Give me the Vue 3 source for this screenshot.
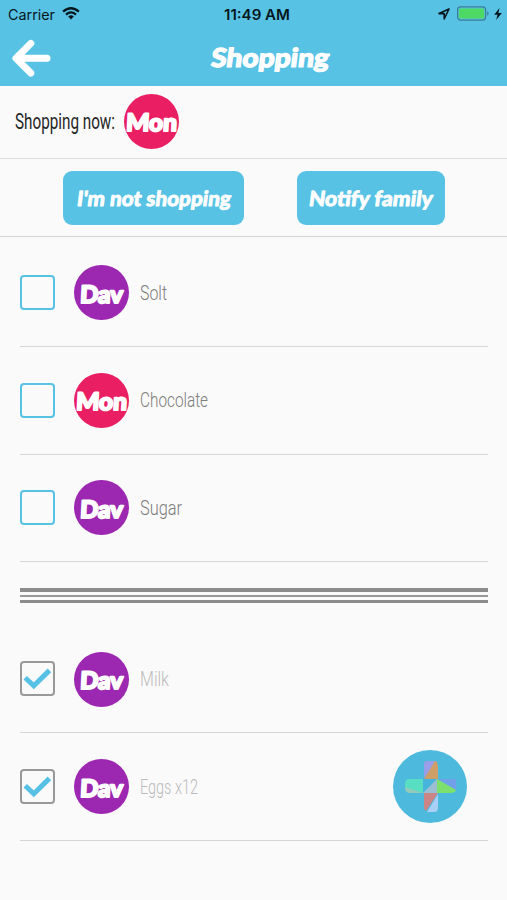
<script setup>
import { h } from 'vue'

// A single line of text set to a fixed measure, so that labels keep their condensed proportions.
const Label = (props) =>
  h('svg', { class: 'label', width: props.w, height: 30, role: 'img', 'aria-label': props.text }, [
    h('text', { x: 0, y: 22, textLength: props.w, lengthAdjust: 'spacingAndGlyphs' }, props.text),
  ])
Label.props = ['text', 'w']

const pending = [
  { who: 'Dav', name: 'Solt', w: 27 },
  { who: 'Mon', name: 'Chocolate', w: 68 },
  { who: 'Dav', name: 'Sugar', w: 42 },
]
const done = [
  { who: 'Dav', name: 'Milk', w: 29 },
  { who: 'Dav', name: 'Eggs x12', w: 58 },
]
const sections = [
  { key: 'pending', items: pending },
  { key: 'done', items: done },
]
const badgeWidth = { Dav: 43, Mon: 51 }
</script>

<template>
  <div class="screen">
    <header class="header">
      <div class="status">
        <div class="side">
          <Label class="carrier" text="Carrier" :w="47" />
          <svg class="wifi" width="18" height="13" viewBox="0 0 18 13">
            <g fill="none" stroke="#06171d" stroke-width="2.2">
              <path d="M1.1 4.7Q9-2.2 16.9 4.7" />
              <path d="M4 7.6Q9 3.3 14 7.6" />
            </g>
            <path d="M6.2 9.5Q9 7.2 11.8 9.5L9 12.5Z" fill="#06171d" />
          </svg>
        </div>
        <Label class="clock" text="11:49 AM" :w="66" />
        <div class="side right">
          <svg width="12" height="12" viewBox="0 0 12 12">
            <path d="M11 1L1 5.6H6.2V11Z" fill="none" stroke="#06171d" stroke-width="1.6" stroke-linejoin="round" />
          </svg>
          <svg class="battery" width="33" height="15" viewBox="0 0 33 15">
            <rect x=".6" y=".9" width="28" height="13.2" rx="3" fill="none" stroke="#397e95" stroke-width="1.2" />
            <rect x="2" y="2.4" width="25.2" height="10.2" rx="1.5" fill="#4cd964" />
            <path d="M30.2 5.2Q33 7.4 30.2 9.8Z" fill="#397e95" />
          </svg>
          <svg width="8" height="12" viewBox="0 0 8 12">
            <path d="M5.5 0L.2 6.8H3.5L2.2 12L7.8 4.9H4.4Z" fill="#06171d" />
          </svg>
        </div>
      </div>
      <div class="navbar">
        <svg class="back" width="40" height="40" viewBox="0 0 40 40">
          <path d="M19.8 5.4L5 20.2L19.8 35M6 20.2H36" fill="none" stroke="#fff" stroke-width="7" stroke-linecap="round" stroke-linejoin="round" />
        </svg>
        <Label class="title" text="Shopping" :w="118" />
      </div>
    </header>

    <section class="now">
      <Label class="now-text" text="Shopping now:" :w="100" />
      <span class="badge mon"><Label text="Mon" :w="51" /></span>
    </section>

    <section class="actions">
      <button class="btn first"><Label text="I'm not shopping" :w="154" /></button>
      <button class="btn second"><Label text="Notify family" :w="124" /></button>
    </section>

    <main>
      <template v-for="s in sections" :key="s.key">
        <div v-if="s.key === 'done'" class="divider"><i></i><i></i><i></i></div>
        <ul class="list" :class="s.key">
          <li v-for="item in s.items" :key="item.name" class="row">
            <span class="check">
              <svg v-if="s.key === 'done'" width="29" height="29" viewBox="0 0 29 29">
                <path d="M2.2 13.7L10.8 21.8L26.4 6.4" fill="none" stroke="#56c1e4" stroke-width="5" />
              </svg>
            </span>
            <span class="badge" :class="item.who.toLowerCase()"><Label :text="item.who" :w="badgeWidth[item.who]" /></span>
            <Label class="name" :text="item.name" :w="item.w" />
          </li>
        </ul>
      </template>
    </main>

    <button class="fab" aria-label="Add">
      <svg width="51" height="51" viewBox="0 0 51 51">
        <path d="M22 0H32L19 17V3Q19 0 22 0Z" fill="#9a9de8" />
        <path d="M30 0Q33 1 33 6V18H19Z" fill="#ce9f69" />
        <path d="M4 18H18V32L0 27Q-1 18 4 18Z" fill="#58dfc3" />
        <path d="M0 26L18 32H5Q0 32 0 26Z" fill="#91cbb9" />
        <path d="M18 18V32L32 18Z" fill="#46b4dd" />
        <path d="M32 18V32H18Z" fill="#9bbfd2" />
        <path d="M33 18H50Q52 19 51 29Z" fill="#729fea" />
        <path d="M32 18L51 29Q50 32 46 32H32Z" fill="#7ee06c" />
        <path d="M19 32H33L21 50Q19 49 19 45Z" fill="#cb8587" />
        <path d="M33 33V47Q33 51 29 51H22Z" fill="#a9cff7" />
      </svg>
    </button>
  </div>
</template>

<style>
body { margin: 0; background: #fafafa; }
</style>

<style scoped>
.screen {
  position: relative;
  width: 507px;
  height: 900px;
  overflow: hidden;
  background: #fafafa;
  font-family: Roboto, "Liberation Sans", sans-serif;
}
svg { display: block; flex: none; overflow: visible; }
button { border: 0; padding: 0; font: inherit; }
.header { height: 86px; background: #58c2e5; }
.status {
  height: 27px;
  display: grid;
  grid-template-columns: 1fr 66px 1fr;
  align-items: center;
  font-family: Inter, sans-serif;
  font-size: 14px;
  fill: #06171d;
}
.side { display: flex; align-items: center; padding-left: 8px; }
.right { justify-content: flex-end; padding: 0 5px 0 0; gap: 4px; }
.battery { margin-left: 3px; }
.carrier, .clock { height: 24px; }
.status .label { transform: translateY(-4px); }
.wifi { margin-left: 7px; margin-top: -1px; }
.status .clock { font-weight: 600; transform: translate(3px, -4px); }
.navbar { height: 61px; display: flex; align-items: center; }
.back { margin-left: 11px; }
.title {
  margin-left: 160px;
  font: 900 26px Lato, sans-serif;
  fill: #fff;
  stroke: #fff;
  stroke-width: 1.2px;
  stroke-linejoin: round;
  transform: translateY(1.5px) skewX(-7deg);
}
.now {
  box-sizing: border-box;
  height: 73px;
  padding: 0 0 2px 15px;
  display: flex;
  align-items: center;
  border-bottom: 1px solid #d9dbdd;
}
.now-text { font-size: 21.5px; fill: #262626; margin-right: 9px; transform: translateY(1px); }
.badge {
  width: 55px;
  height: 55px;
  flex: none;
  border-radius: 50%;
  display: flex;
  align-items: center;
  justify-content: center;
  font: 900 24px Lato, sans-serif;
  fill: #fff;
  stroke: #fff;
  stroke-width: 2px;
  stroke-linejoin: round;
}
.badge .label { transform: translateY(2.5px) skewX(-3deg); }
.mon { background: #e91e63; }
.dav { background: #9c27b0; }
.actions {
  box-sizing: border-box;
  height: 78px;
  padding: 12px 0 0 63px;
  display: flex;
  align-items: flex-start;
  gap: 52px;
  border-bottom: 1px solid #d2d4d6;
}
.btn {
  height: 54px;
  display: flex;
  align-items: center;
  justify-content: center;
  border-radius: 9px;
  background: #58c2e5;
  font: 900 21px Lato, sans-serif;
  fill: #fff;
  stroke: #fff;
  stroke-width: .8px;
  stroke-linejoin: round;
}
.btn .label { transform: translateY(1px) skewX(-7deg); }
.first { width: 181px; }
.second { width: 148px; margin-left: .5px; }
.list { list-style: none; margin: 0; padding: 2.5px 19px 0 20px; }
.done { padding-top: 22.5px; }
.row {
  box-sizing: border-box;
  height: 107.5px;
  display: flex;
  align-items: center;
  border-bottom: 1px solid #d6d6d6;
}
.check {
  box-sizing: border-box;
  width: 35px;
  height: 35px;
  padding: 1px;
  margin-right: 19px;
  border: 2px solid #58c2e5;
  border-radius: 4px;
}
.done .check { border-color: #999; }
.name { margin-left: 11px; font-size: 21px; font-weight: 300; fill: #7c7c7c; }
.done .name { fill: #bbb; }
.done .name, .done .badge { position: relative; top: .5px; }
.divider {
  height: 15px;
  margin: 26px 19px 0 20px;
  display: flex;
  flex-direction: column;
  justify-content: space-between;
}
.divider i { height: 3.5px; background: #8c8c8c; }
.divider i:nth-child(2) { height: 2px; background: #999; }
.fab {
  position: absolute;
  left: 393px;
  top: 750px;
  width: 74px;
  height: 73px;
  border-radius: 50%;
  display: flex;
  align-items: center;
  justify-content: center;
  background: #4db9dd;
}
</style>
